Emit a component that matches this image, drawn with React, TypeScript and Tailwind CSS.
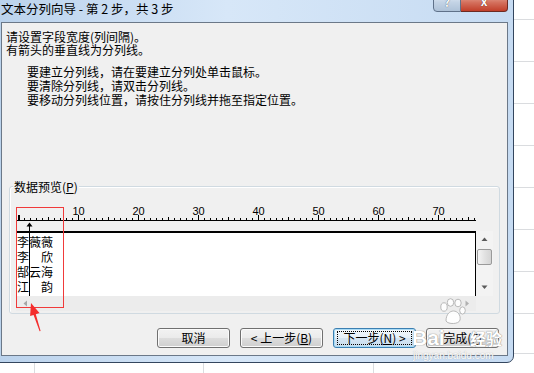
import React from 'react';

const rows = [
  ['李', '薇', '薇'],
  ['李', '', '欣'],
  ['郜', '云', '海'],
  ['江', '', '韵'],
];

const ticks = Array.from({ length: 77 }, (_, i) => i);

function Ruler() {
  return (
    <svg width="466" height="27" className="block ml-[5px]">
      <rect x="2" y="16" width="459" height="1" fill="#000" />
      {ticks.map((i) => {
        const h = i % 10 === 0 ? 5 : i % 5 === 0 ? 3 : 2;
        return <rect key={i} x={3 + i * 6} y={16 - h} width={i === 0 ? 2 : 1} height={h} fill="#000" />;
      })}
      {[10, 20, 30, 40, 50, 60, 70].map((n) => (
        <text
          key={n}
          x={3 + n * 6 + 0.5}
          y="11"
          textAnchor="middle"
          fontSize="11"
          fontFamily="'Liberation Sans', sans-serif"
          fill="#000"
        >
          {n}
        </text>
      ))}
      {/* column break marker */}
      <polygon points="14.5,18.5 11.5,22.5 17.5,22.5" fill="#000" />
      <rect x="14" y="21" width="1" height="6" fill="#000" />
    </svg>
  );
}

function Arrow({ dir, color }: { dir: 'up' | 'down' | 'left' | 'right'; color: string }) {
  const pts = {
    up: '0.5,4 3.5,0.5 6.5,4',
    down: '0.5,0.5 3.5,4 6.5,0.5',
    left: '4,0.5 0.5,3.5 4,6.5',
    right: '0.5,0.5 4,3.5 0.5,6.5',
  }[dir];
  const vertical = dir === 'up' || dir === 'down';
  return (
    <svg width={vertical ? 7 : 5} height={vertical ? 5 : 7}>
      <polygon points={pts} fill={color} />
    </svg>
  );
}

function Button({ children, width, focused }: { children: React.ReactNode; width: string; focused?: boolean }) {
  return (
    <div
      className={`${width} h-[20px] rounded-[3px] border flex items-center justify-center text-[12px] leading-[14px] text-black ${
        focused
          ? 'border-[#3c7fb1] bg-[linear-gradient(#f3f8fc_0%,#e6f0f8_49%,#d6e6f3_50%,#c8dced_100%)] shadow-[inset_0_0_0_1px_#a9dcf7]'
          : 'border-[#707070] bg-[linear-gradient(#f2f2f2_0%,#ebebeb_49%,#dddddd_50%,#cfcfcf_100%)] shadow-[inset_0_0_0_1px_#fbfbfb]'
      }`}
    >
      {focused ? (
        <div className="w-[calc(100%-6px)] h-[14px] border border-dotted border-black flex items-center justify-center">
          {children}
        </div>
      ) : (
        children
      )}
    </div>
  );
}

export default function App() {
  return (
    <div className="relative w-[534px] h-[373px] overflow-hidden bg-white font-['Noto_Sans_CJK_SC',sans-serif]">
      {/* spreadsheet grid behind the dialog */}
      {[19, 61, 103, 145, 187, 229, 271, 313, 353].map((y) => (
        <div key={y} className="absolute left-0 w-full h-px bg-[#dadcdf]" style={{ top: y }} />
      ))}
      {[34, 203, 373].map((x) => (
        <div key={x} className="absolute top-0 h-full w-px bg-[#dadcdf]" style={{ left: x }} />
      ))}

      {/* dialog window */}
      <div className="absolute left-[-7px] top-[-8px] w-[521px] h-[371px] rounded-[7px] border border-[#34465e] bg-[linear-gradient(to_right,#bad2ec,#d7e7f8_45%,#c6dbf2)] flex flex-col pl-[7px] pr-[5px] pb-[6px]">
        {/* title bar */}
        <div className="h-[29px] flex items-start">
          <div className="mt-[8px] text-[12.5px] leading-[15px] text-black whitespace-nowrap">
            文本分列向导 - 第 2 步，共 3 步
          </div>
          <div className="ml-auto flex">
            <div className="w-[28px] h-[19px] rounded-bl-[4px] border border-[#5f7189] bg-[linear-gradient(#e6eef8,#c3d3e5_50%,#aec2d8)] flex items-end justify-center pb-[3px] text-[12px] leading-[12px] font-bold text-white [text-shadow:0_0_1px_#2b3a4f]">
              ?
            </div>
            <div className="w-[47px] h-[19px] rounded-br-[4px] border border-l-0 border-[#6d2a22] bg-[linear-gradient(#eab1a4,#d4705d_50%,#c13f2a)] flex items-end justify-center pb-[4px] text-[12px] leading-[12px] font-bold text-white [text-shadow:0_0_1px_#3a0c05]">
              x
            </div>
          </div>
        </div>

        {/* client area */}
        <div className="flex-1 border border-[#6b7888] bg-[#f0f0f0] flex flex-col">
          <div className="pt-[7px] pl-[4px] text-[12px] text-black">
            <div className="leading-[13px]">请设置字段宽度(列间隔)。</div>
            <div className="leading-[13px]">有箭头的垂直线为分列线。</div>
            <div className="mt-[9px] pl-[21px] leading-[14px]">
              <div>要建立分列线，请在要建立分列处单击鼠标。</div>
              <div>要清除分列线，请双击分列线。</div>
              <div>要移动分列线位置，请按住分列线并拖至指定位置。</div>
            </div>
          </div>

          {/* data preview group */}
          <div className="relative mt-[79px] ml-[7px] w-[491px] h-[128px] rounded-[3px] border border-[#d0dae1] shadow-[inset_1px_1px_0_#ffffff]">
            <div className="absolute -top-[7px] left-[3px] px-[1px] bg-[#f0f0f0] text-[12px] leading-[14px] text-black">
              数据预览(<span className="underline">P</span>)
            </div>
            <div className="mt-[17px]">
              <Ruler />
              <div className="flex ml-[6px]">
                <div className="relative w-[460px] h-[65px] bg-white border-t-2 border-x border-black pt-[1px]">
                  <div className="absolute left-[12px] top-0 w-px h-full bg-black" />
                  {rows.map((r, i) => (
                    <div key={i} className="flex h-[15px] text-[12px] leading-[15px] text-black">
                      {r.map((c, j) => (
                        <span key={j} className="w-[12px] text-center">
                          {c}
                        </span>
                      ))}
                    </div>
                  ))}
                </div>
                <div className="w-[17px] h-[65px] bg-[#f3f3f3] flex flex-col items-center">
                  <div className="h-[17px] flex items-center justify-center">
                    <Arrow dir="up" color="#5a5a5a" />
                  </div>
                  <div className="mt-[1px] w-[15px] h-[16px] rounded-[2px] border border-[#9a9a9a] bg-[linear-gradient(to_right,#f4f4f4,#e2e2e2_50%,#d4d4d4)]" />
                  <div className="flex-1" />
                  <div className="h-[17px] flex items-center justify-center">
                    <Arrow dir="down" color="#5a5a5a" />
                  </div>
                </div>
              </div>
              <div className="ml-[6px] w-[460px] h-[15px] flex items-center justify-between pl-[7px] pr-[6px] bg-[#ececec]">
                <Arrow dir="left" color="#a6a6a6" />
                <Arrow dir="right" color="#b0b0b0" />
              </div>
            </div>
          </div>

          {/* buttons */}
          <div className="mt-[14px] flex justify-end gap-[10px] pr-[8px]">
            <Button width="w-[73px]">取消</Button>
            <Button width="w-[83px]">
              &lt; 上一步(<span className="underline">B</span>)
            </Button>
            <Button width="w-[83px]" focused>
              下一步(<span className="underline">N</span>) &gt;
            </Button>
            <Button width="w-[73px]">
              完成(<span className="underline">F</span>)
            </Button>
          </div>
        </div>
      </div>

      {/* red annotation */}
      <div className="absolute left-[16px] top-[207px] w-[48px] h-[101px] border border-[#f03a3a]" />
      <svg className="absolute left-0 top-0" width="60" height="340" style={{ pointerEvents: 'none' }}>
        <polygon points="31,303 39.5,313 35.8,314.2 40.6,331 39.6,331.3 33.6,315 30.1,316" fill="#f42d2d" />
      </svg>

      {/* watermark */}
      <div className="absolute left-[410px] top-[296px] w-[110px] h-[66px] pointer-events-none">
        <svg className="absolute left-[28px] top-[2px]" width="28" height="28">
          <g fill="#ffffff" fillOpacity="0.9" stroke="#a8a8a8" strokeWidth="0.8">
            <ellipse cx="6" cy="9" rx="3.2" ry="4.2" />
            <ellipse cx="12.5" cy="4.5" rx="3.2" ry="3.8" />
            <ellipse cx="20" cy="5" rx="3.2" ry="3.8" />
            <ellipse cx="24.5" cy="12.5" rx="2.8" ry="3.6" />
            <path d="M8 23 C8 16 12 13 15.5 13 C19.5 13 23 17 22 22 C21 26.5 10 26.5 8 23 Z" />
          </g>
        </svg>
        <div className="absolute left-[2px] top-[31px] text-[21px] leading-[22px] font-bold text-white font-['Liberation_Sans',sans-serif] [text-shadow:0_0_1px_#8c8c8c,0_0_1px_#8c8c8c]">
          Bai
        </div>
        <div className="absolute left-[60px] top-[33px] text-[16px] leading-[18px] font-bold text-white [text-shadow:0_0_1px_#8c8c8c,0_0_1px_#8c8c8c]">
          经验
        </div>
        <div className="absolute left-[3px] top-[54px] text-[10px] leading-[11px] text-white font-['Liberation_Sans',sans-serif] [text-shadow:0_0_1px_#9a9a9a]">
          jingyan.baidu.com
        </div>
      </div>
    </div>
  );
}
